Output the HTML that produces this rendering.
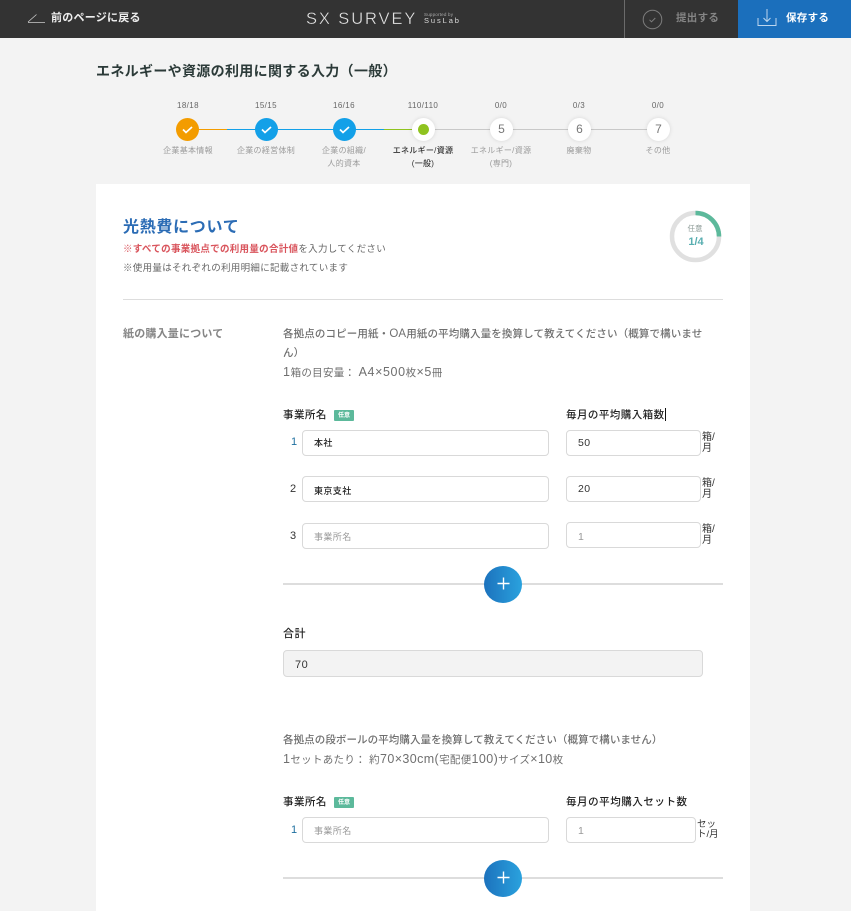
<!DOCTYPE html>
<html lang="ja"><head><meta charset="utf-8"><title>SX SURVEY</title>
<style>
html,body{margin:0;padding:0}
body{width:851px;height:911px;overflow:hidden;background:#f3f3f3;position:relative;font-family:"Liberation Sans","Noto Sans CJK JP",sans-serif;color:#222}
.a{position:absolute;white-space:nowrap}
.c{text-align:center;transform:translateX(-50%)}
.box{position:absolute;box-sizing:border-box;border:1px solid #d9d9d9;border-radius:4px;background:#fff;height:26px}
.t{position:absolute;white-space:nowrap;line-height:14px}
.count{font-size:8px;color:#666;letter-spacing:.4px;top:100px;line-height:11px}
.lb{font-size:8px;color:#9a9a9a;line-height:13px;text-align:center;letter-spacing:.3px}
.dot{position:absolute;width:23px;height:23px;border-radius:50%;top:118px}
.num{background:#fff;color:#777;font-size:12px;line-height:23px;text-align:center;box-shadow:0 0 4px rgba(0,0,0,.12)}
.ln{position:absolute;height:1px;top:129px}
.fs{font-size:9px;font-weight:500;color:#222;letter-spacing:.4px}
.ph{color:#999;font-weight:400}
.unit{font-size:10px;line-height:11px;color:#333}
.n{font-size:11px;color:#333}
.add{position:absolute;width:38px;height:37px;border-radius:50%;background:linear-gradient(90deg,#1c72bd,#2aa2de)}
.tag{position:absolute;width:20px;height:11px;background:#5cb99b;color:#fff;font-size:6px;font-weight:700;line-height:12px;text-align:center;border-radius:1px}
.hd{font-size:10.500px;font-weight:500;color:#222;letter-spacing:.45px;line-height:14px}
.gr{font-size:10.500px;color:#6f6f6f;letter-spacing:.13px;line-height:14px;font-weight:500}
.g2{font-size:10.500px;color:#6f6f6f;letter-spacing:.3px;line-height:14px;font-weight:400}
.l{font-size:12.500px;letter-spacing:.6px}
.l2{font-size:12.500px;letter-spacing:.4px}
</style></head><body>
<div class="a" style="left:0;top:0;width:851px;height:38px;background:#333"></div>
<svg class="a" style="left:27px;top:13px" width="19" height="10" viewBox="0 0 19 10"><path d="M1 9L9.500 1.500M1 9.500H18" stroke="#ccc" stroke-width=".8" fill="none"/></svg>
<div class="a" style="left:51px;top:11px;font-size:11px;line-height:14px;font-weight:700;color:#eee;letter-spacing:.25px">前のページに戻る</div>
<div class="a" style="left:306px;top:9px;font-size:16.500px;line-height:20px;color:#e6e6e6;letter-spacing:1.900px;-webkit-text-stroke:.35px #333">SX SURVEY</div>
<div class="a" style="left:424px;top:12px;font-size:4.500px;line-height:5px;color:#aaa;letter-spacing:.2px">Supported by</div>
<div class="a" style="left:424px;top:17px;font-size:7.500px;line-height:8px;color:#ddd;letter-spacing:1.900px">SusLab</div>
<div class="a" style="left:624px;top:0;width:1px;height:38px;background:#6b6b6b"></div>
<svg class="a" style="left:642px;top:9px" width="21" height="21" viewBox="0 0 21 21"><circle cx="10.500" cy="10.500" r="9.300" fill="none" stroke="#7d7d7d" stroke-width="1"/><path d="M7.500 10.800l2 2 3.800-3.800" fill="none" stroke="#7d7d7d" stroke-width="1"/></svg>
<div class="a" style="left:676px;top:11px;font-size:10.500px;line-height:14px;font-weight:700;color:#858585;letter-spacing:.3px">提出する</div>
<div class="a" style="left:738px;top:0;width:113px;height:38px;background:#1b6fbc"></div>
<svg class="a" style="left:757px;top:8px" width="20" height="19" viewBox="0 0 20 19"><path d="M1 10v7.500h18V10M10 1v12M6.500 10l3.500 3.500 3.500-3.500" fill="none" stroke="#bcd6ee" stroke-width="1"/></svg>
<div class="a" style="left:786px;top:11px;font-size:10.500px;line-height:14px;font-weight:700;color:#fff;letter-spacing:.3px">保存する</div>

<div class="a" style="left:96px;top:62px;font-size:14px;line-height:18px;font-weight:700;color:#2b3a38;letter-spacing:.33px">エネルギーや資源の利用に関する入力（一般）</div>

<div class="ln" style="left:188px;width:39px;background:#f39c00"></div>
<div class="ln" style="left:227px;width:157px;background:#13a0e8"></div>
<div class="ln" style="left:384px;width:39px;background:#8fc31f"></div>
<div class="ln" style="left:423px;width:235px;background:#c8c8c8"></div>

<div class="a c count" style="left:188px">18/18</div>
<div class="a c count" style="left:266px">15/15</div>
<div class="a c count" style="left:344px">16/16</div>
<div class="a c count" style="left:423px">110/110</div>
<div class="a c count" style="left:501px">0/0</div>
<div class="a c count" style="left:579px">0/3</div>
<div class="a c count" style="left:658px">0/0</div>

<div class="dot" style="left:176px;background:#f39c00"></div>
<div class="dot" style="left:255px;background:#13a0e8"></div>
<div class="dot" style="left:333px;background:#13a0e8"></div>
<svg class="a" style="left:176px;top:118px" width="23" height="23" viewBox="0 0 23 23"><path d="M7 11.500l3 3 6-5.500" fill="none" stroke="#fff" stroke-width="1.700"/></svg>
<svg class="a" style="left:255px;top:118px" width="23" height="23" viewBox="0 0 23 23"><path d="M7 11.500l3 3 6-5.500" fill="none" stroke="#fff" stroke-width="1.700"/></svg>
<svg class="a" style="left:333px;top:118px" width="23" height="23" viewBox="0 0 23 23"><path d="M7 11.500l3 3 6-5.500" fill="none" stroke="#fff" stroke-width="1.700"/></svg>
<div class="dot" style="left:412px;background:#fff;box-shadow:0 0 4px rgba(0,0,0,.12)"></div>
<div class="dot" style="left:418px;top:124px;width:11px;height:11px;background:#8fc31f"></div>
<div class="dot num" style="left:490px">5</div>
<div class="dot num" style="left:568px">6</div>
<div class="dot num" style="left:647px">7</div>

<div class="a c lb" style="left:188px;top:144px">企業基本情報</div>
<div class="a c lb" style="left:266px;top:144px">企業の経営体制</div>
<div class="a c lb" style="left:344px;top:144px">企業の組織/<br>人的資本</div>
<div class="a c lb" style="left:423px;top:144px;color:#333;font-weight:500">エネルギー/資源<br>(一般)</div>
<div class="a c lb" style="left:501px;top:144px">エネルギー/資源<br>(専門)</div>
<div class="a c lb" style="left:579px;top:144px">廃棄物</div>
<div class="a c lb" style="left:658px;top:144px">その他</div>

<div class="a" style="left:96px;top:184px;width:654px;height:727px;background:#fff"></div>

<div class="a" style="left:123px;top:218px;font-size:16px;line-height:20px;font-weight:700;color:#2b6cb5;letter-spacing:.7px">光熱費について</div>
<div class="a" style="left:123px;top:243px;font-size:9.500px;line-height:13px;color:#666;letter-spacing:.3px"><span style="color:#d9545c;font-weight:700">※すべての事業拠点での利用量の合計値</span>を入力してください</div>
<div class="a" style="left:123px;top:262px;font-size:9.500px;line-height:13px;color:#666;letter-spacing:.3px">※使用量はそれぞれの利用明細に記載されています</div>

<svg class="a" style="left:669px;top:210px" width="53" height="53" viewBox="0 0 53 53"><circle cx="26.500" cy="26.500" r="23.500" fill="none" stroke="#e0e0e0" stroke-width="4.500"/><path d="M26.500 3A23.500 23.500 0 0 1 50 26.500" fill="none" stroke="#5cb99b" stroke-width="4.500"/></svg>
<div class="a c" style="left:695px;top:224px;font-size:7.500px;line-height:10px;color:#8c9a96">任意</div>
<div class="a c" style="left:696px;top:235px;font-size:11px;line-height:14px;font-weight:700;color:#58aeb0">1/4</div>

<div class="a" style="left:123px;top:299px;width:600px;height:1px;background:#ddd"></div>

<div class="a" style="left:123px;top:327px;font-size:11px;line-height:14px;font-weight:700;color:#858585;letter-spacing:.2px">紙の購入量について</div>
<div class="a gr" style="left:283px;top:327px">各拠点のコピー用紙・<span style="font-size:11.500px">OA</span>用紙の平均購入量を換算して教えてください（概算で構いませ</div>
<div class="a gr" style="left:283px;top:346px">ん）</div>
<div class="a g2" style="left:283px;top:365px"><span class="l">1</span>箱の目安量： <span class="l">A4×500</span>枚<span class="l">×5</span>冊</div>

<div class="a hd" style="left:283px;top:408px">事業所名</div>
<div class="tag" style="left:334px;top:410px">任意</div>
<div class="a hd" style="left:566px;top:408px">毎月の平均購入箱数</div>
<div class="a" style="left:665px;top:408px;width:1px;height:13px;background:#111"></div>

<div class="a n" style="left:291px;top:435px;line-height:14px;color:#1d6f9f">1</div>
<div class="box" style="left:302px;top:430px;width:247px"></div>
<div class="t fs" style="left:314px;top:436px">本社</div>
<div class="box" style="left:566px;top:430px;width:135px"></div>
<div class="t" style="left:578px;top:436px;font-size:10.500px;color:#333;letter-spacing:.4px">50</div>
<div class="a unit" style="left:702px;top:432px">箱/<br>月</div>

<div class="a n" style="left:290px;top:482px;line-height:14px;color:#333">2</div>
<div class="box" style="left:302px;top:476px;width:247px"></div>
<div class="t fs" style="left:314px;top:484px">東京支社</div>
<div class="box" style="left:566px;top:476px;width:135px"></div>
<div class="t" style="left:578px;top:482px;font-size:10.500px;color:#333;letter-spacing:.4px">20</div>
<div class="a unit" style="left:702px;top:478px">箱/<br>月</div>

<div class="a n" style="left:290px;top:529px;line-height:14px;color:#333">3</div>
<div class="box" style="left:302px;top:523px;width:247px"></div>
<div class="t fs ph" style="left:314px;top:530px">事業所名</div>
<div class="box" style="left:566px;top:522px;width:135px"></div>
<div class="t ph" style="left:578px;top:530px;font-size:10.500px">1</div>
<div class="a unit" style="left:702px;top:524px">箱/<br>月</div>

<div class="a" style="left:283px;top:583px;width:440px;height:2px;background:#ddd"></div>
<div class="add" style="left:484px;top:566px"></div>
<svg class="a" style="left:497px;top:577px" width="13" height="13" viewBox="0 0 13 13"><path d="M.500 6.500h12M6.500.500v12" stroke="#fff" stroke-width="1.400"/></svg>

<div class="a hd" style="left:283px;top:627px;font-size:11px">合計</div>
<div class="box" style="left:283px;top:650px;width:420px;height:27px;background:#f3f3f3"></div>
<div class="t" style="left:295px;top:658px;font-size:11px;color:#333;letter-spacing:.5px">70</div>

<div class="a gr" style="left:283px;top:733px;letter-spacing:.08px">各拠点の段ボールの平均購入量を換算して教えてください（概算で構いません）</div>
<div class="a g2" style="left:283px;top:752px"><span class="l2">1</span>セットあたり： 約<span class="l2">70×30cm(</span>宅配便<span class="l2">100)</span>サイズ<span class="l2">×10</span>枚</div>

<div class="a hd" style="left:283px;top:795px">事業所名</div>
<div class="tag" style="left:334px;top:797px">任意</div>
<div class="a hd" style="left:566px;top:795px;letter-spacing:.55px">毎月の平均購入セット数</div>

<div class="a n" style="left:291px;top:823px;line-height:14px;color:#1d6f9f">1</div>
<div class="box" style="left:302px;top:817px;width:247px"></div>
<div class="t fs ph" style="left:314px;top:824px">事業所名</div>
<div class="box" style="left:566px;top:817px;width:130px"></div>
<div class="t ph" style="left:578px;top:824px;font-size:10.500px">1</div>
<div class="a unit" style="left:697px;top:820px;font-size:9.500px;line-height:10px">セッ<br>ト/月</div>

<div class="a" style="left:283px;top:877px;width:440px;height:2px;background:#ddd"></div>
<div class="add" style="left:484px;top:860px"></div>
<svg class="a" style="left:497px;top:871px" width="13" height="13" viewBox="0 0 13 13"><path d="M.500 6.500h12M6.500.500v12" stroke="#fff" stroke-width="1.400"/></svg>
</body></html>
